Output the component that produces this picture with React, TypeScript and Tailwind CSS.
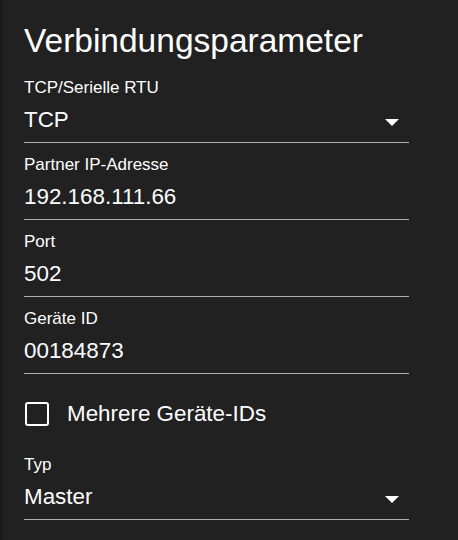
import { useState } from 'react'

const font = { fontFamily: '"Liberation Sans", Arial, sans-serif' }

function Caret() {
  return (
    <svg width="14" height="7" viewBox="0 0 14 7" className="mr-[10px] mt-[5px] shrink-0">
      <path d="M0 0h14L7 7z" fill="#ffffff" />
    </svg>
  )
}

function Field({ label, value, select }: { label: string; value: string; select?: boolean }) {
  return (
    <div className="pt-3 border-b border-[#b0b0b0]">
      <div className="text-[17px] leading-[20px] text-white">{label}</div>
      <div className="mt-2 pb-2 flex items-center justify-between">
        <span className="text-[22.4px] leading-[28px] text-white">{value}</span>
        {select && <Caret />}
      </div>
    </div>
  )
}

export default function App() {
  const [multi, setMulti] = useState(false)

  return (
    <div className="w-[458px] h-[540px] bg-[#212121] flex overflow-hidden" style={font}>
      <div className="w-[3px] bg-[#1a1a1a] shrink-0" />
      <div className="w-[385px] ml-[21px]">
        <h1 className="pt-[21px] mb-[5px] text-[33.5px] leading-[40px] text-white font-normal whitespace-nowrap">
          Verbindungsparameter
        </h1>

        <Field label="TCP/Serielle RTU" value="TCP" select />
        <Field label="Partner IP-Adresse" value="192.168.111.66" />
        <Field label="Port" value="502" />
        <Field label="Geräte ID" value="00184873" />

        {/* Checkbox row */}
        <label className="mt-[26px] mb-[15px] h-[28px] flex items-center cursor-pointer">
          <button
            type="button"
            onClick={() => setMulti(m => !m)}
            className={`ml-[1px] w-[24px] h-[24px] rounded-[3px] border-[2.5px] border-white ${multi ? 'bg-white' : 'bg-transparent'}`}
            aria-label="Mehrere Geräte-IDs"
          />
          <span className="ml-[18px] text-[22.4px] leading-[28px] text-white">Mehrere Geräte-IDs</span>
        </label>

        <Field label="Typ" value="Master" select />
      </div>
    </div>
  )
}
